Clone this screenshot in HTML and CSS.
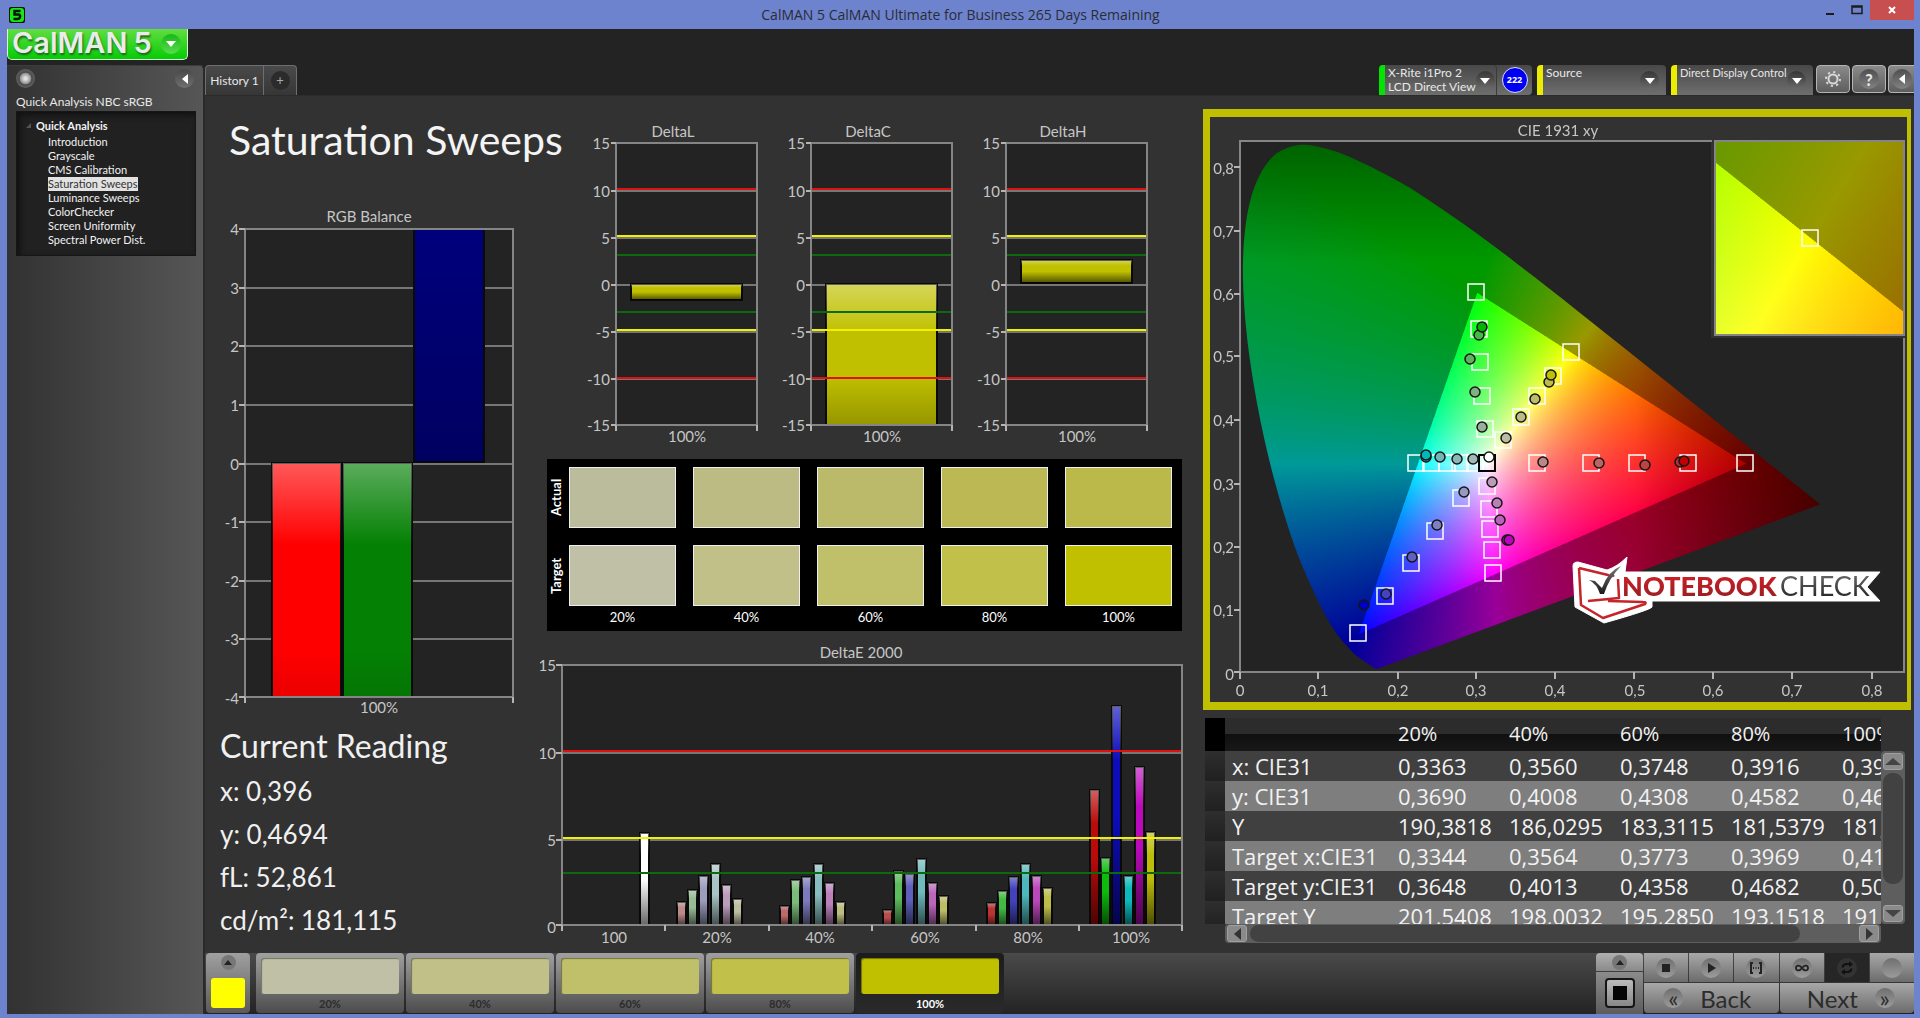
FILE: index.html
```html
<!DOCTYPE html>
<html lang="en">
<head>
<meta charset="utf-8">
<title>CalMAN 5 CalMAN Ultimate for Business 265 Days Remaining</title>
<link rel="stylesheet" href="styles.css">
</head>
<body>
<div class="window">
  <header class="titlebar">
    <svg class="app-icon" viewBox="0 0 16 16" aria-hidden="true"><rect width="16" height="16" rx="2" fill="#031a03"/><rect x="1" y="1" width="14" height="14" rx="3" fill="#18e818"/><path d="M11.500 4H5.500V7.500H9.500Q11.500 8 11 10T8.500 12H4.500" fill="none" stroke="#021402" stroke-width="2.500"/></svg>
    <h1 class="window-title">CalMAN 5 CalMAN Ultimate for Business 265 Days Remaining</h1>
    <div class="window-buttons">
      <button class="win-btn" aria-label="Minimize"><svg width="10" height="12"><rect x="1" y="9" width="8" height="2" fill="#1c1c1c"/></svg></button>
      <button class="win-btn" aria-label="Maximize"><svg width="12" height="10"><path d="M1 1h10v7.500H1zM1 2h10" fill="none" stroke="#1c1c1c" stroke-width="1.500"/></svg></button>
      <button class="win-btn close" aria-label="Close"><svg width="10" height="10"><path d="M2 2l6 6M8 2l-6 6" stroke="#fff" stroke-width="2"/></svg></button>
    </div>
  </header>

  <div class="app">
    <div class="brand-row">
      <button class="brand"><span class="brand-name">CalMAN</span><span class="brand-name">5</span><span class="brand-arrow"><i class="tri down"></i></span></button>
    </div>
    <div class="body-row">
      <aside class="sidebar">
        <div class="sidebar-top">
          <button class="round dot" aria-label="Record"></button>
          <button class="round" aria-label="Collapse panel"><i class="tri left"></i></button>
        </div>
        <h2 class="flow-name">Quick Analysis NBC sRGB</h2>
        <nav class="tree">
          <div class="tree-root"><svg width="6" height="6" aria-hidden="true"><path d="M5 0v5H0z" fill="#555"/></svg>Quick Analysis</div>
          <ul>
            <li><a href="#">Introduction</a></li>
            <li><a href="#">Grayscale</a></li>
            <li><a href="#">CMS Calibration</a></li>
            <li><a href="#" class="current">Saturation Sweeps</a></li>
            <li><a href="#">Luminance Sweeps</a></li>
            <li><a href="#">ColorChecker</a></li>
            <li><a href="#">Screen Uniformity</a></li>
            <li><a href="#">Spectral Power Dist.</a></li>
          </ul>
        </nav>
      </aside>

      <main class="main">
        <div class="toolbar">
          <div class="tabs">
            <button class="tab">History 1</button>
            <button class="tab add" aria-label="New tab"><span>+</span></button>
          </div>
          <div class="devices">
            <div class="device-pair">
              <button class="device green meter"><span>X-Rite i1Pro 2<br>LCD Direct View</span><b class="knob"><i class="tri down"></i></b></button>
              <span class="badge-cell"><span class="badge">222</span></span>
            </div>
            <button class="device yellow source"><span>Source</span><b class="knob"><i class="tri down"></i></b></button>
            <button class="device yellow display"><span>Direct Display Control</span><b class="knob"><i class="tri down"></i></b></button>
            <div class="tools">
              <button class="tool" aria-label="Settings"><svg width="18" height="18" viewBox="0 0 18 18"><circle cx="9" cy="9" r="4.500" fill="none" stroke="#d8d8d8" stroke-width="2"/><circle cx="9" cy="9" r="7" fill="none" stroke="#d8d8d8" stroke-width="2" stroke-dasharray="2.200 3.298"/></svg></button>
              <button class="tool" aria-label="Help"><span>?</span></button>
              <button class="tool last" aria-label="Collapse"><span><i class="tri left"></i></span></button>
            </div>
          </div>
        </div>

        <div class="workspace">
          <section class="col-left">
            <h2 class="page-title">Saturation Sweeps</h2>
            <svg class="chart" viewBox="220 205 315 513" role="img" aria-label="RGB Balance">
              <text x="369" y="222" class="mid">RGB Balance</text>
              <rect x="245" y="229" width="268" height="468" class="plot"/>
              <path class="grid" d="M245 288H513M245 346H513M245 405H513M245 464H513M245 522H513M245 581H513M245 639H513"/>
              <g id="rgb-bars"></g>
              <path class="frame" d="M245 229H513V697H245z"/>
              <path class="tick" d="M239 229h6M239 288h6M239 346h6M239 405h6M239 464h6M239 522h6M239 581h6M239 639h6M239 697h6M245 697v6M513 697v6"/>
              <g class="end"><text x="239" y="235">4</text><text x="239" y="294">3</text><text x="239" y="352">2</text><text x="239" y="411">1</text><text x="239" y="470">0</text><text x="239" y="528">-1</text><text x="239" y="587">-2</text><text x="239" y="645">-3</text><text x="239" y="704">-4</text></g>
              <text x="379" y="713" class="mid">100%</text>
            </svg>
            <div class="reading">
              <h3>Current Reading</h3>
              <p>x: 0,396</p>
              <p>y: 0,4694</p>
              <p>fL: 52,861</p>
              <p>cd/m²: 181,115</p>
            </div>
          </section>

          <section class="col-mid">
            <div class="delta-row">
              <svg class="chart delta" viewBox="0 0 195 325" role="img" aria-label="DeltaL" data-from="164" data-to="180"><text x="96" y="17" class="mid">DeltaL</text></svg>
              <svg class="chart delta" viewBox="0 0 195 325" role="img" aria-label="DeltaC" data-from="164" data-to="305"><text x="96" y="17" class="mid">DeltaC</text></svg>
              <svg class="chart delta" viewBox="0 0 195 325" role="img" aria-label="DeltaH" data-from="140" data-to="163"><text x="96" y="17" class="mid">DeltaH</text></svg>
            </div>
            <div class="patches">
              <span class="side">Actual</span><i class="a20"></i><i class="a40"></i><i class="a60"></i><i class="a80"></i><i class="a100"></i>
              <span class="side">Target</span><i class="t20"></i><i class="t40"></i><i class="t60"></i><i class="t80"></i><i class="t100"></i>
              <span></span><span>20%</span><span>40%</span><span>60%</span><span>80%</span><span>100%</span>
            </div>
            <svg class="chart" viewBox="540 640 650 310" role="img" aria-label="DeltaE 2000">
              <text x="861" y="658" class="mid">DeltaE 2000</text>
              <rect x="562" y="665" width="620" height="260" class="plot"/>
              <path class="grid" d="M562 753H1182M562 840H1182"/>
              <g id="de-bars"></g>
              <path class="lim-red" d="M562 751H1182"/><path class="lim-yellow" d="M562 838H1182"/><path class="lim-green" d="M562 873H1182"/>
              <path class="frame" d="M562 665H1182V925H562z"/>
              <path class="tick" d="M556 665h6M556 753h6M556 840h6M556 925h6M562 925v6M665 925v6M769 925v6M872 925v6M976 925v6M1079 925v6M1182 925v6"/>
              <g class="end"><text x="556" y="671">15</text><text x="556" y="759">10</text><text x="556" y="846">5</text><text x="556" y="933">0</text></g>
              <g class="mid"><text x="614" y="943">100</text><text x="717" y="943">20%</text><text x="820" y="943">40%</text><text x="925" y="943">60%</text><text x="1028" y="943">80%</text><text x="1131" y="943">100%</text></g>
            </svg>
          </section>

          <section class="col-right">
            <div class="cie">
              <canvas id="gamut" width="697" height="585"></canvas>
              <svg class="chart" viewBox="1210 117 697 585" role="img" aria-label="CIE 1931 xy">
                <defs>
                  <linearGradient id="logo-red" x2="0" y2="1"><stop stop-color="#dc1f26"/><stop offset="1" stop-color="#8f1e22"/></linearGradient>
                  <linearGradient id="logo-grey" x2="0" y2="1"><stop stop-color="#777"/><stop offset="1" stop-color="#1a1a1a"/></linearGradient>
                </defs>
                <text x="1558" y="136" class="mid">CIE 1931 xy</text>
                <path class="frame" d="M1240 672V141H1712M1904 338V672H1240"/>
                <rect x="1715" y="141" width="189" height="194" class="frame"/>
                <path class="tick" d="M1234 167h6M1234 231h6M1234 294h6M1234 356h6M1234 420h6M1234 484h6M1234 547h6M1234 610h6M1234 672h6M1240 672v7M1318 672v7M1398 672v7M1476 672v7M1555 672v7M1634 672v7M1713 672v7M1792 672v7M1872 672v7"/>
                <g class="end"><text x="1234" y="174">0,8</text><text x="1234" y="237">0,7</text><text x="1234" y="300">0,6</text><text x="1234" y="362">0,5</text><text x="1234" y="426">0,4</text><text x="1234" y="490">0,3</text><text x="1234" y="553">0,2</text><text x="1234" y="616">0,1</text><text x="1234" y="680">0</text></g>
                <g class="mid"><text x="1240" y="696">0</text><text x="1318" y="696">0,1</text><text x="1398" y="696">0,2</text><text x="1476" y="696">0,3</text><text x="1555" y="696">0,4</text><text x="1635" y="696">0,5</text><text x="1713" y="696">0,6</text><text x="1792" y="696">0,7</text><text x="1872" y="696">0,8</text></g>
                <g id="targets"></g>
                <g id="readings"></g>
                <g>
                  <path d="M1573 566Q1573 562 1578 562L1607 570Q1617 567 1627 557L1625 572H1880L1867 587L1880 601H1652V607Q1650 610 1604 623L1575 607z" fill="#fff" stroke="#fff" stroke-linejoin="round"/>
                  <path d="M1579 568L1608 575Q1612 577 1614 575M1618 579L1619 598L1588 601M1579 568L1581 605L1603 618L1645 604Q1647 602 1643 602L1608 601" fill="none" stroke="#c4242a" stroke-width="2.500" stroke-linejoin="round"/>
                  <path d="M1589 580L1595 581L1602 588Q1608 571 1621 566Q1609 578 1604 594L1600 594Q1597 584 1589 580z" fill="url(#logo-grey)"/>
                  <text x="1622" y="596" class="logo-a">NOTEBOOK</text><text x="1780" y="596" class="logo-b">CHECK</text>
                </g>
              </svg>
            </div>

            <div class="data">
              <div class="table-view">
                <table>
                  <thead><tr><th class="grip"></th><th class="name"></th><th>20%</th><th>40%</th><th>60%</th><th>80%</th><th>100%</th></tr></thead>
                  <tbody>
                    <tr><td class="grip"></td><th scope="row">x: CIE31</th><td>0,3363</td><td>0,3560</td><td>0,3748</td><td>0,3916</td><td>0,3960</td></tr>
                    <tr><td class="grip"></td><th scope="row">y: CIE31</th><td>0,3690</td><td>0,4008</td><td>0,4308</td><td>0,4582</td><td>0,4694</td></tr>
                    <tr><td class="grip"></td><th scope="row">Y</th><td>190,3818</td><td>186,0295</td><td>183,3115</td><td>181,5379</td><td>181,1150</td></tr>
                    <tr><td class="grip"></td><th scope="row">Target x:CIE31</th><td>0,3344</td><td>0,3564</td><td>0,3773</td><td>0,3969</td><td>0,4193</td></tr>
                    <tr><td class="grip"></td><th scope="row">Target y:CIE31</th><td>0,3648</td><td>0,4013</td><td>0,4358</td><td>0,4682</td><td>0,5053</td></tr>
                    <tr><td class="grip"></td><th scope="row">Target Y</th><td>201,5408</td><td>198,0032</td><td>195,2850</td><td>193,1518</td><td>191,2100</td></tr>
                  </tbody>
                </table>
              </div>
              <div class="vbar"><button aria-label="Scroll up"><i class="tri up"></i></button><span class="thumb"></span><button aria-label="Scroll down"><i class="tri down"></i></button></div>
              <div class="hbar"><button aria-label="Scroll left"><i class="tri left"></i></button><span class="thumb"></span><button aria-label="Scroll right"><i class="tri right"></i></button></div>
            </div>
          </section>
        </div>

        <footer class="bottom">
          <button class="current-patch" aria-label="Current colour"><span class="mini"><i class="tri up"></i></span><span class="fill"></span></button>
          <div class="steps">
            <button class="step"><span class="t20"></span>20%</button>
            <button class="step"><span class="t40"></span>40%</button>
            <button class="step"><span class="t60"></span>60%</button>
            <button class="step"><span class="t80"></span>80%</button>
            <button class="step active"><span class="t100"></span>100%</button>
          </div>
          <div class="transport">
            <div class="window-cell">
              <button class="pop" aria-label="Expand"><span class="mini"><i class="tri up"></i></span></button>
              <button class="pattern" aria-label="Pattern window"><span></span></button>
            </div>
            <div class="controls">
              <button aria-label="Stop"><span class="oval"><svg width="16" height="16"><path d="M4 4h8v8H4z" fill="#222"/></svg></span></button>
              <button aria-label="Play"><span class="oval"><svg width="16" height="16"><path d="M5 3l8 5-8 5z" fill="#222"/></svg></span></button>
              <button aria-label="Read series"><span class="oval"><svg width="16" height="16"><path d="M5 3H3v10h2M11 3h2v10h-2" fill="none" stroke="#222" stroke-width="2"/><path d="M5 8h6" stroke="#222" stroke-width="2" stroke-dasharray="1 1.500"/></svg></span></button>
              <button aria-label="Continuous"><span class="oval"><svg width="16" height="16"><path d="M8 8C6 5 2 4.500 2 8s4 3 6 0 6-3.500 6 0-4 3-6 0z" fill="none" stroke="#222" stroke-width="1.800"/></svg></span></button>
              <button class="on" aria-label="Refresh"><span class="oval"><svg width="16" height="16"><path d="M3.500 7.500Q4 4 8 4h3M12.500 8.500Q12 12 8 12H5" fill="none" stroke="#111" stroke-width="2"/><path d="M10 1l4 3.500L10 7zM6 9l-4 3 4 3z" fill="#111"/></svg></span></button>
              <button aria-label="Status"><span class="oval"></span></button>
              <button class="wide back"><span class="oval">«</span>Back</button>
              <button class="wide next">Next<span class="oval">»</span></button>
            </div>
          </div>
        </footer>
      </main>
    </div>
  </div>
</div>
<svg class="defs" width="0" height="0" aria-hidden="true">
  <linearGradient id="gloss" x2="0" y2="1"><stop stop-color="#fff" stop-opacity=".35"/><stop offset=".25" stop-color="#fff" stop-opacity="0"/><stop offset=".5" stop-opacity="0"/><stop offset="1" stop-opacity=".6"/></linearGradient>
  <linearGradient id="gloss-cut" x2="0" y2="1"><stop stop-color="#fff" stop-opacity=".35"/><stop offset=".35" stop-color="#fff" stop-opacity="0"/><stop offset=".65" stop-opacity="0"/><stop offset="1" stop-opacity=".22"/></linearGradient>
  <linearGradient id="gloss-top" x2="0" y2="1"><stop stop-color="#fff" stop-opacity=".35"/><stop offset=".35" stop-color="#fff" stop-opacity="0"/><stop offset=".8" stop-opacity="0"/><stop offset="1" stop-opacity=".08"/></linearGradient>
  <linearGradient id="gloss-low" x2="0" y2="1"><stop stop-opacity="0"/><stop offset="1" stop-opacity=".22"/></linearGradient>
</svg>
<script src="charts.js"></script>
</body>
</html>
```

FILE: styles.css
```css
* { box-sizing: border-box; }
body { margin: 0; background: #6d83cd; color: #e8e8e8; font-family: Lato, "Open Sans", sans-serif; font-size: 12px; }
button { font: inherit; color: inherit; border: 0; padding: 0; margin: 0; background: none; }
h1, h2, h3, p, ul { margin: 0; padding: 0; font-weight: 400; }
ul { list-style: none; }
a { color: inherit; text-decoration: none; }
.defs { position: absolute; }

.window { min-height: 100vh; display: flex; flex-direction: column; padding: 0 6px 4px 7px; }
.titlebar { height: 29px; display: grid; grid-template-columns: 1fr auto 1fr; align-items: center; }
.app-icon { width: 16px; height: 16px; margin-left: 2px; }
.window-title { font: 14px "Open Sans", sans-serif; color: #2a2c38; }
.window-buttons { display: flex; justify-content: flex-end; align-self: start; }
.win-btn { width: 27px; height: 20px; display: grid; place-items: center; }
.close { width: 44px; background: #c84f50; }

.tri { display: block; width: 0; height: 0; border: 5px solid transparent; }
.tri.down { border-top: 6px solid #fff; border-bottom: 0; }
.tri.up { border-bottom: 6px solid #222; border-top: 0; }
.tri.left { border-right: 6px solid #fff; border-left: 0; }
.tri.right { border-left: 6px solid #222; border-right: 0; }

.app { flex: 1; display: flex; flex-direction: column; background: #232323; }
.brand-row { height: 36px; }
.brand { width: 181px; height: 31px; display: flex; align-items: center; gap: 6px; padding: 0 6px 4px 4px; background: linear-gradient(#62dd40, #06cc06); border: 1px solid #d4f5d4; border-top: 0; border-radius: 0 0 5px 5px; }
.brand-name { font: 600 29px/27px Inter, sans-serif; color: #ebebeb; text-shadow: 1px 2px 2px #1d661d; }
.brand-arrow { width: 20px; height: 20px; margin-left: auto; margin-top: 3px; border-radius: 50%; display: grid; place-items: center; background: linear-gradient(#17b817, #58dc50); }

.body-row { flex: 1; display: flex; }
.sidebar { width: 198px; flex: none; padding: 3px 9px 9px; background: linear-gradient(90deg, #323232, #565656); border-top: 1px solid #3c3c3c; border-right: 2px solid #2a2a2a; border-radius: 0 5px 0 0; }
.sidebar-top { display: flex; justify-content: space-between; }
.round { width: 19px; height: 19px; border-radius: 50%; background: linear-gradient(#484848, #707070); display: grid; place-items: center; }
.round.dot { background: radial-gradient(circle, #e0e0e0 0 10%, #909090 40%, #4c4c4c 46%, #777 100%); }
.flow-name { font-size: 12px; line-height: 16px; margin: 6px 0 1px; }
.tree { height: 145px; width: 180px; padding: 7px 0 0 10px; background: #212121; border: 1px solid #161616; box-shadow: inset 3px 3px 6px #111; font-size: 11px; line-height: 14px; color: #f2f2f2; }
.tree-root { display: flex; align-items: center; gap: 4px; font-weight: 700; margin-bottom: 2px; }
.tree-root svg { margin-left: -1px; }
.tree ul { padding-left: 21px; }
.tree li { height: 14px; }
.tree .current { display: inline-block; background: #e2e2e2; color: #333; }

.main { flex: 1; min-width: 0; display: flex; flex-direction: column; }
.toolbar { height: 30px; display: flex; justify-content: space-between; overflow: hidden; }
.tabs { display: flex; }
.tab { width: 59px; border: 1px solid #6e6e6e; border-bottom: 0; border-radius: 4px 0 0 0; background: linear-gradient(#4a4a4a, #363636); white-space: nowrap; }
.tab.add { width: 33px; border-left: 0; border-radius: 0 4px 0 0; display: grid; place-items: center; }
.tab.add span { width: 19px; height: 19px; border-radius: 50%; background: #2b2b2b; color: #aaa; font-size: 13px; line-height: 18px; }
.devices { display: flex; gap: 5px; }
.device-pair { display: flex; background: linear-gradient(#484848, #6e6e6e); border-radius: 4px; width: 153px; }
.device { display: flex; justify-content: space-between; align-items: flex-start; text-align: left; line-height: 14px; padding: 1px 7px 0 3px; white-space: nowrap; border-left: 6px solid; border-radius: 4px 4px 0 0; background: linear-gradient(#484848, #6e6e6e); }
.device.green { border-left-color: #00e400; }
.device.yellow { border-left-color: #ecec00; }
.meter { width: 118px; padding-right: 10px; border-right: 1px solid #3a3a3a; }
.source { width: 129px; }
.display { width: 142px; font-size: 11px; }
.knob { width: 19px; height: 19px; border-radius: 50%; margin-top: 5px; flex: none; background: linear-gradient(#363636, #6c6c6c); display: grid; place-items: center; }
.badge-cell { flex: 1; display: grid; place-items: center; }
.badge { width: 26px; height: 26px; border-radius: 50%; border: 1px solid #dcdcff; background: #0000f4; color: #fff; font: 700 9px/24px "Open Sans", sans-serif; text-align: center; }
.tools { display: flex; gap: 2px; margin-left: -2px; }
.tool { width: 34px; height: 28px; border: 1px solid #b4b4b4; border-radius: 4px; background: linear-gradient(#8a8a8a, #5e5e5e); display: grid; place-items: center; font-size: 16px; font-weight: 900; }
.tool span { width: 20px; height: 20px; border-radius: 50%; background: linear-gradient(#4e4e4e, #828282); display: grid; place-items: center; }
.tool.last { width: 26px; border-right: 0; border-radius: 4px 0 0 4px; }

.workspace { flex: 1; background: #323232; display: grid; grid-template-columns: 335fr 650fr 724fr; border-top: 1px solid #2b2b2b; }
.workspace > section { min-width: 0; }
.chart { display: block; width: 100%; height: auto; }
.chart text { font-size: 15px; fill: #c6c6c6; }
.mid { text-anchor: middle; }
.end { text-anchor: end; }
.plot { fill: #232323; }
.grid { fill: none; stroke: #767676; stroke-width: 2; }
.frame { fill: none; stroke: #858585; stroke-width: 2; }
.tick { fill: none; stroke: #b4b4b4; stroke-width: 2; }
.lim-red { stroke: #e01010; stroke-width: 2; }
.lim-yellow { stroke: #f0f000; stroke-width: 2; }
.lim-green { stroke: #0c6a0c; stroke-width: 2; }

.col-left { padding: 20px 5px 0 15px; }
.page-title { font-size: 41px; line-height: 48px; margin: 0 0 41px 9px; white-space: nowrap; color: #f4f4f4; }
.reading { padding: 4px 0 0; color: #f0f0f0; }
.reading h3 { font-size: 32px; line-height: 48px; }
.reading p { font-size: 26px; line-height: 43px; }

.col-mid { padding-top: 24px; }
.delta-row { display: flex; margin: 0 28px 0 37px; }
.delta { flex: 1; min-width: 0; }
.patches { margin: 14px 8px 9px 7px; padding: 8px 10px 0 0; height: 172px; background: #000; display: grid; grid-template: 78px 61px 22px / 5px repeat(5, 1fr); column-gap: 17px; font-size: 13px; color: #fff; }
.patches i { border: 1px solid #eee; height: 61px; }
.patches span { text-align: center; line-height: 22px; }
.patches .side { writing-mode: vertical-rl; transform: rotate(180deg); font-weight: 700; width: 18px; height: 61px; line-height: 18px; }
.a20 { background: #bbbc9c; } .a40 { background: #bcbb83; } .a60 { background: #bbb96a; } .a80 { background: #bcb954; } .a100 { background: #bab94a; }
.t20 { background: #c0c0a6; } .t40 { background: #c1c088; } .t60 { background: #c0c06a; } .t80 { background: #c0c04a; } .t100 { background: #c0c000; }

.col-right { padding: 13px 3px 0 13px; }
.cie { display: grid; border: solid #c0c000; border-width: 8px 4px 8px 7px; }
.cie > * { grid-area: 1 / 1; width: 100%; }
.cie canvas { display: block; height: auto; }
#targets rect { fill: none; stroke: #fff; stroke-width: 1.5px; }
#targets .white-point { stroke: #000; stroke-width: 2px; }
#readings circle { stroke: #161616; stroke-width: 1.5px; }
.chart .logo-a { font-size: 27px; font-weight: 900; fill: url(#logo-red); }
.chart .logo-b { font-size: 27px; fill: url(#logo-grey); }

.data { margin: 8px 6px 0 2px; display: grid; grid-template: 206px 19px / minmax(0, 1fr) 24px; }
.table-view { overflow: hidden; }
table { width: 741px; table-layout: fixed; border-collapse: collapse; font: 22px/28px "Open Sans", sans-serif; color: #f2f2f2; }
th { font-weight: 400; text-align: left; }
th, td { padding: 0 0 1px 7px; width: 111px; height: 30px; white-space: nowrap; overflow: hidden; }
.grip { width: 20px; background: linear-gradient(#2e2e2e, #202020); }
.name { width: 166px; }
thead th { height: 33px; font-size: 20px; background: linear-gradient(#2c2c2c 50%, #101010 50%, #181818); }
thead .grip { background: #000; }
tbody tr { background: #404040; }
tbody tr:nth-child(even) { background: #7e7e7e; }
.vbar { margin-top: 33px; background: #5e5e5e; border-radius: 4px; padding: 2px; display: flex; flex-direction: column; gap: 3px; }
.hbar { background: #5e5e5e; border-radius: 4px; margin-left: 20px; padding: 1px 2px; display: flex; gap: 3px; }
.data button { width: 20px; height: 17px; border-radius: 3px; background: #8a8a8a; border: 1px solid #a0a0a0; display: grid; place-items: center; flex: none; }
.data .tri.up { border-width: 0 8px 7px; border-bottom-color: #444; }
.data .tri.down { border-width: 7px 8px 0; border-top-color: #444; }
.data .tri.left { border-width: 6px 7px 6px 0; border-right-color: #333; }
.data .tri.right { border-width: 6px 0 6px 7px; border-left-color: #333; }
.thumb { background: #424242; border-radius: 9px; }
.vbar .thumb { height: 111px; margin-bottom: auto; }
.hbar .thumb { flex: 0 1 550px; margin-right: auto; }

.bottom { height: 61px; display: flex; background: linear-gradient(#4a4a4a, #232323); }
.mini { width: 15px; height: 15px; border-radius: 50%; background: #777; display: grid; place-items: center; }
.mini .tri { border-width: 0 4px 5px; }
.current-patch { width: 44px; margin: 0 6px 1px 1px; padding: 2px 5px 5px; border-radius: 4px; background: linear-gradient(#a0a0a0, #5a5a5a); display: flex; flex-direction: column; align-items: center; justify-content: space-between; }
.current-patch .fill { width: 34px; height: 30px; background: #ff0; border-radius: 3px; }
.steps { display: flex; gap: 2px; }
.step { width: 148px; height: 60px; padding: 5px 5px 0; border-radius: 4px; background: linear-gradient(#a0a0a0, #4c4c4c); color: #2c2c2c; font-size: 11px; font-weight: 700; line-height: 20px; }
.step span { display: block; height: 36px; border-radius: 3px; box-shadow: inset 1px 1px 1px #0006; }
.step.active { background: linear-gradient(#1c1c1c, #2a2a2a); color: #fff; }
.transport { margin-left: auto; display: flex; gap: 1px; }
.window-cell { width: 47px; display: flex; flex-direction: column; gap: 1px; }
.pop { height: 18px; background: linear-gradient(#b0b0b0, #8a8a8a); border-radius: 4px 4px 0 0; display: grid; place-items: center; }
.pattern { flex: 1; background: linear-gradient(#8c8c8c, #5c5c5c); display: grid; place-items: center; }
.pattern span { width: 30px; height: 30px; border-radius: 4px; border: 2px solid #151515; background: linear-gradient(#050505, #050505) center / 14px 14px no-repeat, linear-gradient(#bbb, #888); }
.controls { width: 270px; display: grid; grid-template: 29px 30px / repeat(6, 1fr); gap: 1px; padding-bottom: 1px; }
.controls button { background: linear-gradient(#a8a8a8, #6c6c6c); display: flex; align-items: center; justify-content: center; }
.controls .on { background: #262626; }
.controls .wide { grid-column: span 3; font-size: 24px; color: #2c2c2c; gap: 17px; border-radius: 0 0 4px 4px; }
.controls .back { padding-right: 8px; }
.controls .next { padding-left: 8px; }
.oval { width: 20px; height: 20px; border-radius: 50%; background: linear-gradient(#6f6f6f, #9c9c9c); display: grid; place-items: center; line-height: 18px; }
.on .oval { background: #333; }
```

FILE: charts.js
```javascript
const NS = 'http://www.w3.org/2000/svg';

function add(parent, tag, attrs, text) {
  const el = document.createElementNS(NS, tag);
  for (const k in attrs) el.setAttribute(k, attrs[k]);
  if (text) el.textContent = text;
  parent.appendChild(el);
  return el;
}

function bar(parent, x, y, width, height, fill, gloss) {
  const box = { x, y, width, height };
  add(parent, 'rect', { ...box, fill, stroke: '#0a0a0a', 'stroke-width': 2 });
  add(parent, 'rect', { ...box, fill: `url(#${gloss})` });
}

// RGB balance
const rgb = document.getElementById('rgb-bars');
bar(rgb, 272, 463, 69, 234, '#ff0000', 'gloss-top');
bar(rgb, 343, 463, 69, 234, '#048004', 'gloss-top');
bar(rgb, 414, 229, 70, 233, '#00007c', 'gloss-low');

// DeltaL, DeltaC, DeltaH
document.querySelectorAll('.delta').forEach(svg => {
  const ys = [23, 71, 118, 165, 212, 259, 305];
  add(svg, 'rect', { x: 39, y: 23, width: 141, height: 282, class: 'plot' });
  add(svg, 'path', { class: 'grid', d: ys.map(y => `M39 ${y}H180`).join('') });
  const from = +svg.dataset.from, to = +svg.dataset.to;
  bar(svg, 54, from, 111, to - from, '#c0c000', to > 300 ? 'gloss-cut' : 'gloss');
  add(svg, 'path', { class: 'lim-red', d: 'M39 69H180M39 258H180' });
  add(svg, 'path', { class: 'lim-yellow', d: 'M39 116H180M39 210H180' });
  add(svg, 'path', { class: 'lim-green', d: 'M39 135H180M39 192H180' });
  add(svg, 'path', { class: 'frame', d: 'M39 23H180V305H39z' });
  add(svg, 'path', { class: 'tick', d: ys.map(y => `M34 ${y}h5`).join('') + 'M39 305v6M180 305v6' });
  ys.forEach((y, i) => add(svg, 'text', { x: 33, y: y + 6, class: 'end' }, String(15 - i * 5)));
  add(svg, 'text', { x: 110, y: 322, class: 'mid' }, '100%');
});

// DeltaE 2000: left edge of each group, bar tops, bar colours
const de = document.getElementById('de-bars');
bar(de, 640, 833, 9, 92, '#ffffff', 'gloss');
[
  [677, [902, 890, 876, 864, 885, 899], ['#bb8a8a', '#98bb98', '#9c9cbd', '#a8c4c4', '#bb9dbb', '#bdbd9f']],
  [780, [906, 880, 877, 864, 883, 902], ['#bb6a6a', '#7abb7a', '#7c7cbd', '#88bcbe', '#bb80bb', '#bdbd80']],
  [883, [910, 871, 874, 859, 883, 896], ['#bb4c4c', '#5cbb5c', '#5f5fbd', '#70babd', '#bb66bb', '#bdbd66']],
  [987, [903, 891, 877, 864, 876, 888], ['#bb3434', '#42bb42', '#4242bd', '#4cb8bd', '#bb48bb', '#bdbd4a']],
  [1090, [790, 858, 706, 876, 767, 832], ['#bb0a0a', '#0cbb0c', '#0c0cbd', '#0cbabd', '#bb0abb', '#bdbd0a']],
].forEach(([x, tops, fills]) => tops.forEach((y, i) =>
  bar(de, x + Math.round(i * 11.2), y, 9, 925 - y, fills[i], 'gloss')));

// Target squares
const targets = document.getElementById('targets');
[
  [1416, 463], [1431, 463], [1447, 463], [1460, 463], [1475, 463],
  [1537, 463], [1591, 463], [1637, 463], [1688, 463], [1745, 463],
  [1476, 292], [1479, 329], [1480, 362], [1482, 396], [1485, 429],
  [1571, 352], [1553, 376], [1537, 396], [1521, 417], [1503, 440],
  [1487, 486], [1489, 509], [1490, 529], [1492, 550], [1493, 573],
  [1461, 498], [1435, 531], [1411, 563], [1385, 596], [1358, 633],
  [1810, 238],
].forEach(([x, y]) => add(targets, 'rect', { x: x - 8, y: y - 8, width: 16, height: 16 }));
add(targets, 'rect', { x: 1479, y: 455, width: 16, height: 16, class: 'white-point' });

// Measured points
const readings = document.getElementById('readings');
[
  [1479, 335, '#46b846'], [1482, 327, '#00b400'], [1470, 359, '#60b060'], [1475, 392, '#80b080'], [1482, 427, '#98b098'],
  [1549, 382, '#bcbc4a'], [1551, 375, '#c0c000'], [1535, 399, '#bcbc6a'], [1521, 417, '#bcbc86'], [1506, 438, '#bcbca0'],
  [1426, 457, '#40b8b8'], [1426, 455, '#00b8b8'], [1440, 457, '#70b8b8'], [1457, 459, '#88b8b8'], [1473, 459, '#a0b8b8'],
  [1543, 462, '#bc8686'], [1599, 463, '#bc6464'], [1645, 465, '#bc4444'], [1680, 462, '#b43030'], [1684, 461, '#c00000'],
  [1492, 482, '#b89cb8'], [1497, 503, '#b880b8'], [1500, 520, '#b864b8'], [1507, 540, '#b840b8'], [1509, 540, '#c000c0'],
  [1464, 492, '#9898c0'], [1437, 525, '#8080c0'], [1412, 557, '#6060c0'], [1386, 594, '#4444c0'], [1364, 605, '#0000c0'],
  [1489, 457, '#ffffff'],
].forEach(([cx, cy, fill]) => add(readings, 'circle', { cx, cy, r: 5, fill }));

// Chromaticity diagram
const canvas = document.getElementById('gamut');
const ctx = canvas.getContext('2d');
const OX = 30, OY = 555, SX = 790, SY = 632;

const locus = [
  [.1741, .005], [.1714, .0051], [.1644, .0109], [.1566, .0177], [.144, .0297], [.1241, .0578], [.1096, .0868],
  [.0913, .1327], [.0687, .2007], [.0454, .295], [.0235, .4127], [.0082, .5384], [.0039, .6548], [.0139, .7502],
  [.0389, .812], [.0743, .8338], [.1142, .8262], [.1547, .8059], [.1929, .7816], [.2296, .7543], [.3016, .6923],
  [.3731, .6245], [.4441, .5547], [.5125, .4866], [.5752, .4242], [.627, .3725], [.6658, .334], [.6915, .3083],
  [.719, .2809], [.7347, .2653],
];

function colour(x, y) {
  y = Math.max(y, 0.0005);
  const X = x / y, Z = (1 - x - y) / y;
  const lin = [
    3.2406 * X - 1.5372 - 0.4986 * Z,
    -0.9689 * X + 1.8758 + 0.0415 * Z,
    0.0557 * X - 0.204 + 1.057 * Z,
  ];
  const inside = Math.min(...lin) >= -0.0005;
  const max = Math.max(...lin);
  let k = inside ? 1 : 0.6;
  k *= 1 - Math.max(0, x - 0.5) * 2.3;
  k *= 1 - Math.max(0, y - 0.65) * 1.9;
  return lin.map(c => 255 * k * Math.pow(Math.max(c, 0) / max, 0.85));
}

function field(width, height, toXY) {
  const c = document.createElement('canvas');
  c.width = width * 2;
  c.height = height * 2;
  const g = c.getContext('2d');
  const img = g.createImageData(c.width, c.height);
  let p = 0;
  for (let j = 0; j < c.height; j++) {
    for (let i = 0; i < c.width; i++) {
      const [x, y] = toXY(i / 2, j / 2);
      const [r, gr, b] = colour(x, y);
      img.data[p++] = r;
      img.data[p++] = gr;
      img.data[p++] = b;
      img.data[p++] = 255;
    }
  }
  g.putImageData(img, 0, 0);
  return c;
}

ctx.fillStyle = '#232323';
ctx.fillRect(30, 24, 664, 531);

// Spectral locus as a smooth curve through its points
const pts = locus.map(([x, y]) => [OX + x * SX, OY - y * SY]);
ctx.save();
ctx.beginPath();
ctx.moveTo(...pts[0]);
for (let i = 0; i < pts.length - 1; i++) {
  const a = pts[Math.max(i - 1, 0)], b = pts[i], c = pts[i + 1], d = pts[Math.min(i + 2, pts.length - 1)];
  ctx.bezierCurveTo(
    b[0] + (c[0] - a[0]) / 6, b[1] + (c[1] - a[1]) / 6,
    c[0] - (d[0] - b[0]) / 6, c[1] - (d[1] - b[1]) / 6,
    c[0], c[1]);
}
ctx.closePath();
ctx.clip();
ctx.drawImage(field(697, 585, (i, j) => [(i - OX) / SX, (OY - j) / SY]), 0, 0, 697, 585);
ctx.restore();

// Magnified view round the selected target
ctx.fillStyle = '#323232';
ctx.fillRect(501, 22, 196, 199);
ctx.drawImage(field(189, 194, (i, j) => [0.4193 + (i - 95) / 3200, 0.5053 - (j - 97) / 3200]), 505, 24, 189, 194);
```
